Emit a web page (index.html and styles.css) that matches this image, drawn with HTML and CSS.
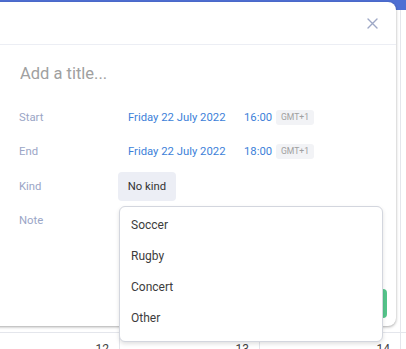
FILE: index.html
```html
<!DOCTYPE html>
<html lang="en">
<head>
<meta charset="UTF-8">
<meta name="viewport" content="width=device-width, initial-scale=1.0">
<title>New event</title>
<link rel="stylesheet" href="styles.css">
</head>
<body>

<div class="topbar"></div>
<div class="calendar">
    <div class="cell"></div>
    <div class="cell"></div>
    <div class="cell"></div>
    <div class="cell"></div>
    <div class="cell day">12</div>
    <div class="cell day">13</div>
    <div class="cell day">14</div>
    <div class="cell day"></div>
</div>

<div class="modal">
    <div class="modal-header">
        <button class="close" type="button" aria-label="Close">
            <svg width="11" height="11" viewBox="0 0 11 11"><path d="M1 1L10 10M10 1L1 10" stroke="#9ea8c6" stroke-width="1.4" stroke-linecap="round"/></svg>
        </button>
    </div>
    <div class="modal-body">
        <input class="title" type="text" placeholder="Add a title...">
        <div class="row">
            <span class="label">Start</span>
            <div class="value">
                <span class="date">Friday 22 July 2022</span>
                <span class="time">16:00</span>
                <span class="tz">GMT+1</span>
            </div>
        </div>
        <div class="row">
            <span class="label">End</span>
            <div class="value">
                <span class="date">Friday 22 July 2022</span>
                <span class="time">18:00</span>
                <span class="tz">GMT+1</span>
            </div>
        </div>
        <div class="row">
            <span class="label">Kind</span>
            <div class="value kind">
                <button class="kind-btn" type="button">No kind</button>
                <ul class="dropdown">
                    <li>Soccer</li>
                    <li>Rugby</li>
                    <li>Concert</li>
                    <li>Other</li>
                </ul>
            </div>
        </div>
        <div class="row">
            <span class="label">Note</span>
            <div class="value"></div>
        </div>
    </div>
    <div class="modal-footer">
        <button class="save" type="button">Save</button>
    </div>
</div>

</body>
</html>
```
FILE: styles.css
```css
body {
    font-family: Roboto, "Liberation Sans", sans-serif;
    margin: 0;
    padding: 0;
    background-color: #fff;
    overflow: hidden;
    width: 406px;
    height: 349px;
    position: relative;
}

.topbar {
    height: 10px;
    background-color: #4e6fd3;
}

.calendar {
    display: grid;
    grid-template-columns: 120px 140px 141px 140px;
    grid-template-rows: 323px 40px;
}

.cell {
    border-right: 1px solid #e4e6ec;
    border-bottom: 1px solid #e4e6ec;
}

.day {
    text-align: right;
    padding: 9px 10px 0 0;
    font-size: 12px;
    color: #444;
}

.modal {
    position: absolute;
    top: 2px;
    left: -10px;
    width: 406px;
    height: 324px;
    background-color: #fff;
    border-radius: 8px;
    box-shadow: 0 1px 3px rgba(0, 0, 0, 0.35);
    display: flex;
    flex-direction: column;
}

.modal-header {
    height: 42px;
    border-bottom: 1px solid #eceef4;
    display: flex;
    justify-content: flex-end;
    align-items: center;
    padding-right: 18px;
}

.close {
    border: none;
    background: none;
    padding: 0;
    width: 11px;
    height: 11px;
    display: flex;
    cursor: pointer;
}

.modal-body {
    flex: 1;
    padding: 0 0 0 29px;
}

.title {
    display: block;
    border: none;
    outline: none;
    font-family: inherit;
    font-size: 16.5px;
    padding: 0;
    margin: 17px 0 0 1px;
    height: 22px;
    width: 340px;
    color: #333;
}

.title::placeholder {
    color: #a0a0a0;
}

.row {
    display: flex;
    align-items: center;
    height: 34.5px;
}

.row:first-of-type {
    margin-top: 16px;
}

.label {
    width: 109px;
    font-size: 11.3px;
    color: #9aa5c6;
}

.value {
    display: flex;
    align-items: center;
    font-size: 11.3px;
}

.date {
    color: #3d7fd9;
    width: 116px;
}

.time {
    color: #3d7fd9;
    width: 32px;
}

.tz {
    background-color: #f2f3f6;
    color: #a0a0a0;
    font-size: 8.6px;
    line-height: 15px;
    padding: 0 5px;
    border-radius: 3px;
}

.kind {
    position: relative;
    margin-left: -10px;
}

.kind-btn {
    font-family: inherit;
    font-size: 11.3px;
    color: #333;
    background-color: #eceef5;
    border: none;
    border-radius: 4px;
    height: 29px;
    width: 58px;
    padding: 0;
}

.dropdown {
    position: absolute;
    top: 34px;
    left: 1px;
    width: 262px;
    margin: 0;
    padding: 3px 0 7px;
    list-style: none;
    background-color: #fff;
    border: 1px solid #d3d6de;
    border-radius: 6px;
    box-shadow: 0 2px 4px rgba(0, 0, 0, 0.12);
    z-index: 2;
}

.dropdown li {
    height: 31px;
    line-height: 31px;
    padding-left: 11px;
    font-size: 12px;
    color: #3c3c3c;
}

.modal-footer {
    display: flex;
    justify-content: flex-end;
    padding: 0 9px 8px 0;
}

.save {
    font-family: inherit;
    font-size: 12px;
    color: #fff;
    background-color: #55c58b;
    border: none;
    border-radius: 4px;
    height: 29px;
    padding: 0 16px;
}
```
